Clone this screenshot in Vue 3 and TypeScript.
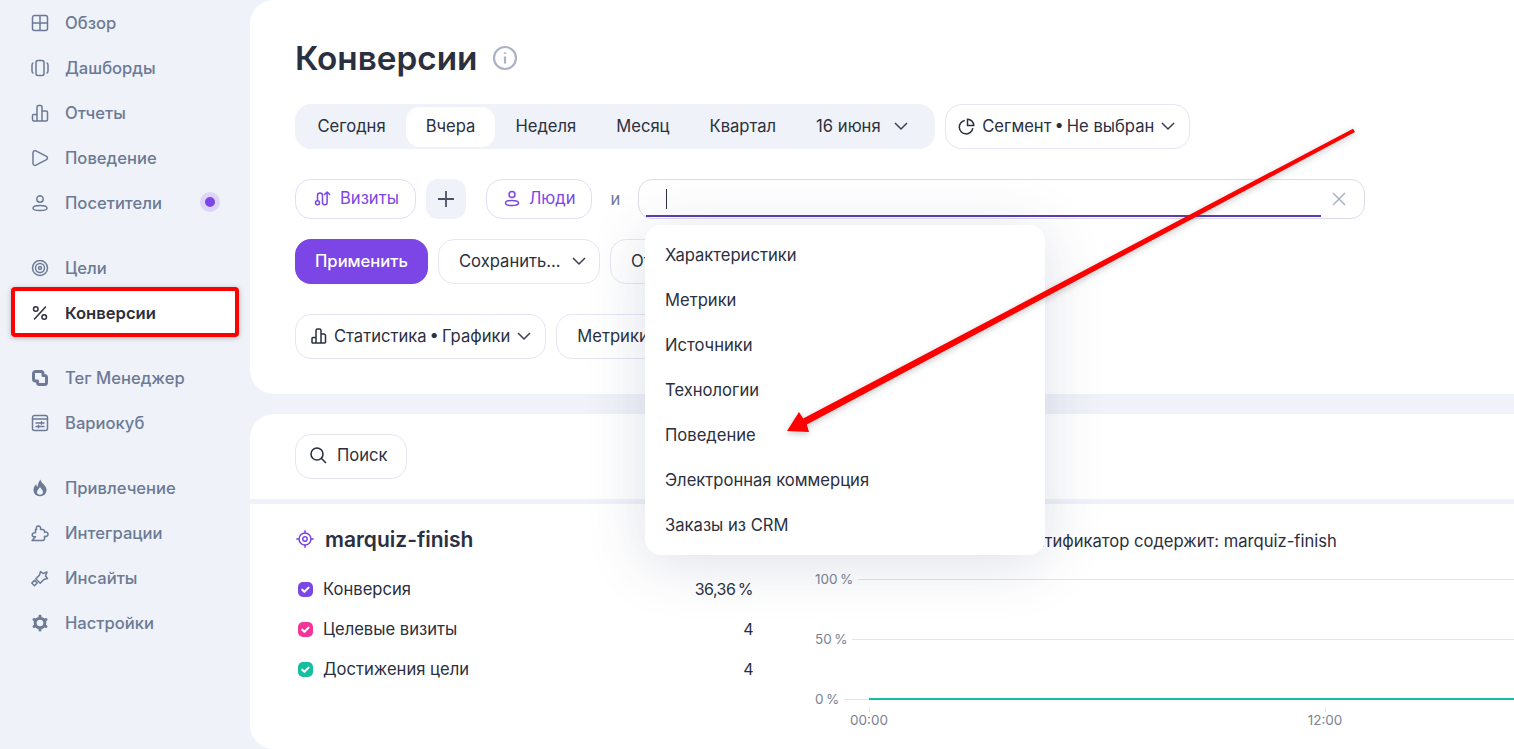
<script setup lang="ts">
interface NavItem {
  label: string
  d: string
  fill?: boolean
  sw?: number
  active?: boolean
  badge?: boolean
}

const navGroups: NavItem[][] = [
  [
    { label: 'Обзор', d: 'M4.500 2.500h11a2 2 0 0 1 2 2v11a2 2 0 0 1-2 2h-11a2 2 0 0 1-2-2v-11a2 2 0 0 1 2-2z M10 2.500v15 M2.500 10h15' },
    { label: 'Дашборды', d: 'M8 2.500h4a2 2 0 0 1 2 2v11a2 2 0 0 1-2 2H8a2 2 0 0 1-2-2v-11a2 2 0 0 1 2-2z M3 5c-.7.5-1 1.200-1 2v6c0 .8.3 1.500 1 2 M17 5c.7.5 1 1.200 1 2v6c0 .8-.3 1.500-1 2' },
    { label: 'Отчеты', d: 'M2.500 16.500v-4a1 1 0 0 1 1-1h3.500v6.500h-3a1.500 1.500 0 0 1-1.500-1.500z M7 18V4a1.500 1.500 0 0 1 1.500-1.500h2A1.500 1.500 0 0 1 12 4v14 M7 18h9a1.500 1.500 0 0 0 1.500-1.500V9.500A1.500 1.500 0 0 0 16 8h-4' },
    { label: 'Поведение', d: 'M3 4.500a2 2 0 0 1 3-1.700l10.500 5.500a2 2 0 0 1 0 3.400L6 17.200a2 2 0 0 1-3-1.700z' },
    { label: 'Посетители', d: 'M6.800 6a3.200 3.200 0 1 0 6.400 0a3.200 3.200 0 1 0-6.400 0z M3 15.200c0-1.500 3-2.700 7-2.700s7 1.200 7 2.700-3 2.300-7 2.300-7-.8-7-2.300z', badge: true },
  ],
  [
    { label: 'Цели', d: 'M2.500 10a7.500 7.500 0 1 0 15 0a7.500 7.500 0 1 0-15 0z M5.500 10a4.500 4.500 0 1 0 9 0a4.500 4.500 0 1 0-9 0z M8.500 10a1.500 1.500 0 1 0 3 0a1.500 1.500 0 1 0-3 0z' },
    { label: 'Конверсии', d: 'M15.500 4l-11 12 M3.500 6a2.300 2.300 0 1 0 4.600 0a2.300 2.300 0 1 0-4.600 0z M11.900 14a2.300 2.300 0 1 0 4.600 0a2.300 2.300 0 1 0-4.600 0z', active: true },
  ],
  [
    { label: 'Тег Менеджер', sw: 3, d: 'M7 13H5.500a2 2 0 0 1-2-2V5.500a2 2 0 0 1 2-2H11a2 2 0 0 1 2 2V7 M13 7.500h1.500a2 2 0 0 1 2 2v5a2 2 0 0 1-2 2h-5a2 2 0 0 1-2-2V13' },
    { label: 'Вариокуб', d: 'M4.500 2.500h11a2 2 0 0 1 2 2v11a2 2 0 0 1-2 2h-11a2 2 0 0 1-2-2v-11a2 2 0 0 1 2-2z M2.500 6h15 M6 10h8 M6 13.500h8 M11.500 8.800v2.400 M8.500 12.300v2.400' },
  ],
  [
    { label: 'Привлечение', fill: true, d: 'M10.500 1.500c.4 3.200 4.400 5 5.700 8.500 1.300 3.700-1.300 8.300-6.200 8.300S2.500 13.700 3.800 10c.6-1.700 1.500-2.700 2.400-3.700.2 1.300.6 2.100 1.400 2.700.2-2.700 1-5.200 2.900-7.500z M10 16.800c-1.900 0-3-1.300-3-2.800 0-1.900 2-3 3-5 1 2 3 3.100 3 5 0 1.500-1.100 2.800-3 2.800z' },
    { label: 'Интеграции', d: 'M2 17.500h10.500a2 2 0 0 0 2-2v-2.200c2.500.7 3.800-1 3.500-2.500-.3-1.600-2-2.300-3.500-1.500V8.500a2 2 0 0 0-2-2h-2c.6-2-.5-3.500-2.200-3.500S6 4.500 6.600 6.500H5.500v3.300c-1.800-.3-3.300.6-3.300 2.100 0 1.400 1.300 2.200 3.300 1.900z' },
    { label: 'Инсайты', d: 'M1.800 15l2.700-2.700 2.700 2.700-2.700 2.700z M5.800 10.800l3.700-3.700 1-3.600 2.500 2 4-1.500-1.500 4 2 2.500-3.600 1-3.700 3.700z' },
    { label: 'Настройки', sw: 3, d: 'M5.200 10a4.800 4.800 0 1 0 9.600 0a4.800 4.800 0 1 0-9.600 0z M10 3v2 M10 15v2 M4 6.500l1.700 1 M14.300 12.500l1.700 1 M4 13.500l1.700-1 M14.300 7.500l1.700-1' },
  ],
]

const periods = ['Сегодня', 'Вчера', 'Неделя', 'Месяц', 'Квартал']
const menuItems = ['Характеристики', 'Метрики', 'Источники', 'Технологии', 'Поведение', 'Электронная коммерция', 'Заказы из CRM']
const metrics = [
  { name: 'Конверсия', value: '36,36\u2009%', color: '#7b46e5' },
  { name: 'Целевые визиты', value: '4', color: '#f5339b' },
  { name: 'Достижения цели', value: '4', color: '#12bfa0' },
]
const gridRows = [
  { label: '100\u2009%', zero: false },
  { label: '50\u2009%', zero: false },
  { label: '0\u2009%', zero: true },
]
</script>

<template>
  <div class="page">
    <aside class="sidebar">
      <div v-for="(group, i) in navGroups" :key="i" class="nav-group">
        <div v-for="item in group" :key="item.label" class="nav-item" :class="{ active: item.active }">
          <svg class="nav-icon" viewBox="0 0 20 20" :fill="item.fill ? 'currentColor' : 'none'" :fill-rule="item.fill ? 'evenodd' : undefined" :stroke="item.fill ? 'none' : 'currentColor'" :stroke-width="item.sw ?? 1.5" stroke-linecap="round" stroke-linejoin="round"><path :d="item.d" /></svg>
          <span>{{ item.label }}</span>
          <i v-if="item.badge" class="badge"></i>
          <b v-if="item.active" class="red-box"></b>
        </div>
      </div>
    </aside>

    <main class="content">
      <section class="panel top">
        <h1 class="title">
          Конверсии
          <svg class="info" viewBox="0 0 26 26" fill="none" stroke="#aab2c6" stroke-width="2.200"><circle cx="13" cy="13" r="11" /><path d="M13 11.500v7 M13 7.500v1.500" /></svg>
        </h1>

        <div class="row r-period">
          <div class="periods">
            <span v-for="p in periods" :key="p" class="period" :class="{ on: p === 'Вчера' }">{{ p }}</span>
            <span class="period date">16 июня <svg class="chev" viewBox="0 0 16 16"><path d="M2 5l6 6 6-6" /></svg></span>
          </div>
          <button class="btn seg">
            <svg class="ic" viewBox="0 0 18 18" fill="none" stroke="currentColor" stroke-width="1.500"><path d="M6.800 3.400A6.800 6.800 0 1 0 14.800 11.200 M9.500 2.200a6.500 6.500 0 0 1 6.300 6.300H9.500z" /></svg>
            Сегмент&thinsp;•&thinsp;Не выбран
            <svg class="chev" viewBox="0 0 16 16"><path d="M2 5l6 6 6-6" /></svg>
          </button>
        </div>

        <div class="row r-filter">
          <button class="btn violet">
            <svg class="ic" viewBox="0 0 18 18" fill="none" stroke="currentColor" stroke-width="1.500" stroke-linecap="round" stroke-linejoin="round"><circle cx="3.500" cy="13.800" r="2" /><path d="M3.500 11.500V6.500a2.500 2.500 0 0 1 5 0v7a2.300 2.300 0 0 0 4.600 0V3 M10.500 5.500L13.100 3l2.600 2.500" /></svg>
            Визиты
          </button>
          <button class="plus"><svg viewBox="0 0 16 16" stroke="#4b5266" stroke-width="1.800"><path d="M8 0v16 M0 8h16" /></svg></button>
          <button class="btn violet people">
            <svg class="ic" viewBox="0 0 18 18" fill="none" stroke="currentColor" stroke-width="1.500"><circle cx="9" cy="5.500" r="3" /><ellipse cx="9" cy="14" rx="6.500" ry="2.500" /></svg>
            Люди
          </button>
          <span class="conj">и</span>
          <div class="input">
            <span class="caret"></span>
            <svg class="clear" viewBox="0 0 14 14" stroke="#aab2c6" stroke-width="1.500"><path d="M1 1l12 12 M13 1L1 13" /></svg>
          </div>
        </div>

        <div class="row r-actions">
          <button class="apply">Применить</button>
          <button class="btn save">Сохранить... <svg class="chev" viewBox="0 0 16 16"><path d="M2 5l6 6 6-6" /></svg></button>
          <button class="btn">Отменить</button>
        </div>

        <div class="row r-view">
          <button class="btn stat">
            <svg class="ic" viewBox="0 0 18 18" fill="none" stroke="currentColor" stroke-width="1.500" stroke-linejoin="round"><path d="M2 15.500v-4a1 1 0 0 1 1-1h3V16H2.500z M6 16V3.500A1.500 1.500 0 0 1 7.500 2h2A1.500 1.500 0 0 1 11 3.500V16 M2.500 16h12a1 1 0 0 0 1-1V8.500A1.500 1.500 0 0 0 14 7h-3" /></svg>
            Статистика&thinsp;•&thinsp;Графики
            <svg class="chev" viewBox="0 0 16 16"><path d="M2 5l6 6 6-6" /></svg>
          </button>
          <button class="btn">Метрики</button>
        </div>
      </section>

      <section class="panel bottom">
        <div class="search-bar">
          <button class="btn search">
            <svg class="ic" viewBox="0 0 18 18" fill="none" stroke="currentColor" stroke-width="1.600" stroke-linecap="round"><circle cx="8" cy="8" r="6" /><path d="M12.500 12.500l4 4" /></svg>
            Поиск
          </button>
        </div>
        <div class="goal">
          <div class="goal-info">
            <h2 class="goal-title">
              <svg class="target" viewBox="0 0 18 18" fill="none" stroke="#7b46e5" stroke-width="1.500" stroke-linecap="round"><circle cx="9" cy="9" r="6" /><circle cx="9" cy="9" r="2.200" /><path d="M9 .8v2.200 M9 15v2.200 M.8 9H3 M15 9h2.200" /></svg>
              marquiz-finish
            </h2>
            <div v-for="m in metrics" :key="m.name" class="metric">
              <span class="check" :style="{ background: m.color }"><svg viewBox="0 0 16 16" fill="none" stroke="#fff" stroke-width="2.200" stroke-linecap="round" stroke-linejoin="round"><path d="M4.500 8.200l2.300 2.300 4.500-4.500" /></svg></span>
              <span class="m-name">{{ m.name }}</span>
              <span class="m-val">{{ m.value }}</span>
            </div>
          </div>
          <div class="chart">
            <div class="chart-head">Идентификатор содержит: marquiz-finish</div>
            <div v-for="r in gridRows" :key="r.label" class="grid-row">
              <span class="tick-label">{{ r.label }}</span>
              <span class="grid-line" :class="{ zero: r.zero }"></span>
            </div>
            <div class="times"><span>00:00</span><span>12:00</span></div>
          </div>
        </div>
      </section>
    </main>

    <div class="menu">
      <div v-for="m in menuItems" :key="m" class="menu-item">{{ m }}</div>
    </div>

    <svg class="arrow" viewBox="0 0 1514 749"><polygon points="1353,128.700 803.200,418.400 799,412 787,431 809,432 806.800,424.600 1355,132" fill="#ff0000" /></svg>
  </div>
</template>

<style>
html, body { margin: 0; background: #eff2f8; overflow: hidden; }
</style>

<style scoped>
.page {
  position: relative;
  display: flex;
  width: 1514px;
  height: 749px;
  overflow: hidden;
  background: #eff2f8;
  color: #2b3040;
  font-family: Inter, "Noto Sans", sans-serif;
  font-size: 16.600px;
}
button { font: inherit; color: inherit; background: none; cursor: pointer; }

/* sidebar */
.sidebar { width: 250px; flex: none; padding-left: 12px; box-sizing: border-box; }
.nav-group { margin-bottom: 20px; width: 225px; }
.nav-item {
  position: relative;
  display: flex;
  align-items: center;
  gap: 15px;
  height: 45px;
  padding-left: 18px;
  color: #6c7a96;
  font-weight: 500;
}
.nav-item.active { background: #fff; color: #2b3040; font-weight: 600; }
.nav-icon { width: 20px; height: 20px; flex: none; }
.badge {
  position: absolute;
  right: 17px;
  top: 12px;
  width: 10px;
  height: 10px;
  border-radius: 50%;
  background: #7b46e5;
  border: 5px solid #ddd5f7;
}
.red-box {
  position: absolute;
  inset: -3px -1.500px -2px -1px;
  border: 4px solid #ff0000;
  border-radius: 4px;
  box-shadow: 0 1px 5px rgba(60, 60, 60, .35);
}

/* main */
.content { flex: 1; display: flex; flex-direction: column; gap: 20px; min-width: 0; }
.panel { background: #fff; border-radius: 24px 0 0 24px; }
.top { height: 394px; padding-left: 45px; box-sizing: border-box; }
.bottom { height: 335px; }
.title {
  display: flex;
  align-items: center;
  gap: 15px;
  margin: 0;
  height: 104px;
  box-sizing: border-box;
  padding-top: 12px;
  font-size: 33.300px;
  font-weight: 600;
}
.info { width: 26px; height: 26px; }
.row { display: flex; align-items: center; gap: 10px; }
.r-period { height: 45px; }
.r-filter { margin-top: 30px; height: 40px; }
.r-actions { margin-top: 20px; height: 45px; }
.r-view { margin-top: 30px; height: 45px; }

.periods {
  display: flex;
  height: 45px;
  padding: 2.500px;
  box-sizing: border-box;
  background: #eff2f8;
  border-radius: 16px;
}
.period {
  display: flex;
  align-items: center;
  gap: 12px;
  padding: 0 20px 2px;
  border-radius: 14px;
  white-space: nowrap;
}
.period.on { background: #fff; }
.date { padding-right: 24px; }
.chev { width: 16px; height: 16px; fill: none; stroke: #3a4052; stroke-width: 1.500; }
.ic { width: 18px; height: 18px; flex: none; }

.btn {
  display: flex;
  align-items: center;
  height: 100%;
  padding: 0 20px 2px;
  gap: 5px;
  border: 1.500px solid #e6e6f3;
  border-radius: 16px;
  box-sizing: border-box;
  background: #fff;
  white-space: nowrap;
}
.seg { padding: 0 13px 2px 12px; gap: 6px; }
.violet { color: #7b46e5; border-color: #e4dcf8; gap: 8px; padding: 0 16px 2px 18px; }
.plus {
  display: flex;
  align-items: center;
  justify-content: center;
  width: 40px;
  height: 40px;
  border: 0;
  border-radius: 12px;
  background: #eff2f8;
}
.plus svg { width: 16px; height: 16px; }
.people { margin-left: 10px; padding: 0 15px 2px 16px; }
.conj { margin: 0 8px 0 9px; color: #6c7a96; }
.input {
  position: relative;
  width: 727px;
  height: 40px;
  border: 1px solid #dcdce8;
  border-radius: 14px;
  box-sizing: border-box;
}
.input::after {
  content: '';
  position: absolute;
  left: 7px;
  right: 43px;
  bottom: 1px;
  height: 2px;
  background: #5b3cb0;
}
.caret { position: absolute; left: 27px; top: 9px; width: 1px; height: 20px; background: #2b3040; }
.clear { position: absolute; right: 18px; top: 12px; width: 14px; height: 14px; }
.apply {
  height: 45px;
  width: 133px;
  padding: 0 0 2px;
  border: 0;
  border-radius: 16px;
  background: #7b46e5;
  color: #fff;
  font-weight: 500;
}
.save { width: 162px; gap: 10px; padding-right: 12px; }
.stat { padding: 0 13px 2px 14px; gap: 6px; }

.search-bar { height: 85px; display: flex; align-items: center; padding-left: 45px; border-bottom: 5px solid #eff2f8; }
.search { height: 45px; padding: 0 18px 3px 13px; gap: 10px; }
.goal { display: flex; padding-left: 45px; }
.goal-info { width: 458px; flex: none; }
.goal-title {
  display: flex;
  align-items: center;
  gap: 11px;
  margin: 0 0 -5px;
  height: 70px;
  font-size: 21px;
  font-weight: 600;
}
.target { width: 18px; height: 18px; flex: none; margin-left: 1px; }
.metric { display: flex; align-items: center; height: 40px; }
.check { display: flex; width: 15px; height: 15px; border-radius: 5px; margin-left: 3px; margin-right: 10px; }
.check svg { width: 15px; height: 15px; }
.m-name { flex: 1; }
.m-val { text-align: right; font-size: 16px; letter-spacing: -.5px; }

.chart { flex: 1; margin-left: 62px; min-width: 0; }
.chart-head { height: 45px; padding: 27px 0 0 187px; box-sizing: border-box; white-space: nowrap; }
.grid-row { display: flex; align-items: center; gap: 5px; height: 60px; }
.tick-label { font-size: 13.500px; color: #7b8294; white-space: nowrap; }
.grid-line { flex: 1; height: 1px; background: #e3e3ee; position: relative; }
.zero::after { content: ''; position: absolute; left: 25px; right: 0; top: -1px; height: 2px; background: #12bfa0; }
.times { display: flex; gap: 418px; padding-left: 35px; font-size: 13.500px; color: #7b8294; margin-top: -17px; }
.times span { position: relative; width: 38px; flex: none; text-align: center; }
.times span::before { content: ''; position: absolute; left: 19px; top: -5px; width: 1px; height: 5px; background: #e3e3ee; }

/* overlays */
.menu {
  position: absolute;
  left: 645px;
  top: 225px;
  width: 400px;
  height: 330px;
  padding: 7.500px 0;
  box-sizing: border-box;
  background: #fff;
  border-radius: 16px;
  box-shadow: 0 8px 60px rgba(50, 60, 110, .16);
}
.menu-item { display: flex; align-items: center; height: 45px; padding-left: 20px; }
.arrow {
  position: absolute;
  inset: 0;
  width: 1514px;
  height: 749px;
  pointer-events: none;
  filter: drop-shadow(0 2px 3px rgba(60, 60, 60, .3));
}
</style>
